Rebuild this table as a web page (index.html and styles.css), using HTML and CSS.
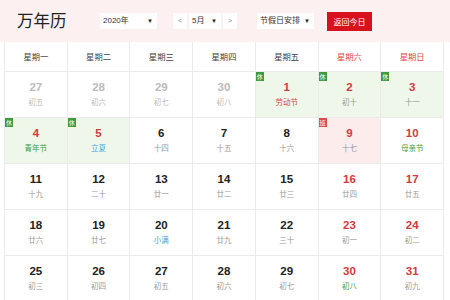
FILE: index.html
```html
<!DOCTYPE html>
<html lang="zh-CN">
<head>
<meta charset="utf-8">
<link rel="stylesheet" href="styles.css">
</head>
<body>
<div class="top">
  <div class="title">万年历</div>
  <div class="sel year">2020年<span class="arr">▼</span></div>
  <div class="nav">
    <div class="sel btn">&lt;</div>
    <div class="sel month">5月<span class="arr">▼</span></div>
    <div class="sel btn">&gt;</div>
  </div>
  <div class="sel hol">节假日安排<span class="arr">▼</span></div>
  <div class="today">返回今日</div>
</div>
<div class="cal">
  <div class="wk">星期一</div><div class="wk">星期二</div><div class="wk">星期三</div><div class="wk">星期四</div><div class="wk">星期五</div><div class="wk we">星期六</div><div class="wk we">星期日</div>

  <div class="d other"><b>27</b><i>初五</i></div>
  <div class="d other"><b>28</b><i>初六</i></div>
  <div class="d other"><b>29</b><i>初七</i></div>
  <div class="d other"><b>30</b><i>初八</i></div>
  <div class="d rest red"><span class="tag">休</span><b>1</b><i class="fr">劳动节</i></div>
  <div class="d rest red"><span class="tag">休</span><b>2</b><i>初十</i></div>
  <div class="d rest red"><span class="tag">休</span><b>3</b><i>十一</i></div>

  <div class="d rest red"><span class="tag">休</span><b>4</b><i class="fg">青年节</i></div>
  <div class="d rest red"><span class="tag">休</span><b>5</b><i class="fb">立夏</i></div>
  <div class="d"><b>6</b><i>十四</i></div>
  <div class="d"><b>7</b><i>十五</i></div>
  <div class="d"><b>8</b><i>十六</i></div>
  <div class="d work red"><span class="tag wt">班</span><b>9</b><i>十七</i></div>
  <div class="d red"><b>10</b><i class="fg">母亲节</i></div>

  <div class="d"><b>11</b><i>十九</i></div>
  <div class="d"><b>12</b><i>二十</i></div>
  <div class="d"><b>13</b><i>廿一</i></div>
  <div class="d"><b>14</b><i>廿二</i></div>
  <div class="d"><b>15</b><i>廿三</i></div>
  <div class="d red"><b>16</b><i>廿四</i></div>
  <div class="d red"><b>17</b><i>廿五</i></div>

  <div class="d"><b>18</b><i>廿六</i></div>
  <div class="d"><b>19</b><i>廿七</i></div>
  <div class="d"><b>20</b><i class="fb">小满</i></div>
  <div class="d"><b>21</b><i>廿九</i></div>
  <div class="d"><b>22</b><i>三十</i></div>
  <div class="d red"><b>23</b><i>初一</i></div>
  <div class="d red"><b>24</b><i>初二</i></div>

  <div class="d"><b>25</b><i>初三</i></div>
  <div class="d"><b>26</b><i>初四</i></div>
  <div class="d"><b>27</b><i>初五</i></div>
  <div class="d"><b>28</b><i>初六</i></div>
  <div class="d"><b>29</b><i>初七</i></div>
  <div class="d red"><b>30</b><i class="fg">初八</i></div>
  <div class="d red"><b>31</b><i>初九</i></div>
</div>
</body>
</html>
```
FILE: styles.css
```css
* { box-sizing: border-box; }
body {
  margin: 0;
  width: 450px;
  height: 300px;
  overflow: hidden;
  background: #fff;
  font-family: "Liberation Sans", "Noto Sans CJK SC", sans-serif;
  color: #333;
}
.top {
  height: 42px;
  background: #fcf1f0;
  display: flex;
  align-items: center;
  padding-left: 17px;
}
.title {
  font-family: "Noto Sans CJK SC", sans-serif;
  font-size: 16.5px;
  color: #222;
  width: 83px;
  line-height: 20px;
  margin-top: -2px;
}
.sel {
  background: #fff;
  height: 16px;
  font-size: 8px;
  line-height: 16px;
  color: #333;
  font-family: "Liberation Sans", "Noto Sans CJK SC", sans-serif;
  padding-left: 3px;
  display: flex;
  align-items: center;
  justify-content: space-between;
  padding-right: 4px;
}
.arr { font-size: 6px; color: #222; }
.year { width: 57px; }
.nav { display: flex; gap: 2px; margin-left: 16px; }
.btn { width: 14px; justify-content: center; padding: 0; color: #888; font-size: 7px; }
.month { width: 32px; }
.hol { width: 57px; margin-left: 20px; }
.today {
  margin-left: 13px;
  width: 45px;
  height: 19px;
  background: #d8121c;
  color: #fff;
  font-size: 8px;
  line-height: 19px;
  text-align: center;
  font-family: "Noto Sans CJK SC", sans-serif;
}
.cal {
  margin-left: 4px;
  width: 440px;
  display: grid;
  grid-template-columns: repeat(7, 1fr);
  grid-template-rows: 30px repeat(5, 46px);
  border-left: 1px solid #ebebeb;
}
.wk {
  font-family: "Noto Sans CJK SC", sans-serif;
  font-size: 8.3px;
  color: #444;
  text-align: center;
  line-height: 28px;
  border-right: 1px solid #ebebeb;
  border-bottom: 1px solid #ebebeb;
}
.wk.we { color: #e0474c; }
.d {
  position: relative;
  display: flex;
  flex-direction: column;
  align-items: center;
  padding-top: 8px;
  border-right: 1px solid #ebebeb;
  border-bottom: 1px solid #ebebeb;
}
.d b {
  font-family: "Liberation Sans", sans-serif;
  font-weight: bold;
  font-size: 11.5px;
  line-height: 14px;
  color: #222;
}
.d i {
  font-style: normal;
  font-family: "Noto Sans CJK SC", sans-serif;
  font-size: 7.5px;
  line-height: 10px;
  margin-top: 3px;
  color: #999;
}
.d.other b { color: #bbb; }
.d.other i { color: #bbb; }
.d.red b { color: #d23a40; }
.d i.fr { color: #d9474c; }
.d i.fg { color: #3f9b3a; }
.d i.fb { color: #3d9fd8; }
.rest { background: #eef7ea; }
.work { background: #fcecec; }
.tag {
  position: absolute;
  left: 0;
  top: 0;
  width: 8px;
  height: 9px;
  background: #3d9a3f;
  color: #fff;
  font-family: "Noto Sans CJK SC", sans-serif;
  font-size: 6px;
  line-height: 9px;
  text-align: center;
}
.tag.wt { background: #e04a4a; }
```
